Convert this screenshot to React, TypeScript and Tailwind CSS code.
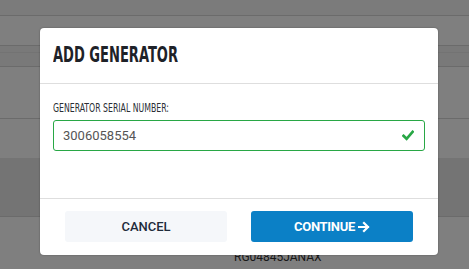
import React from "react";

export default function App() {
  return (
    <div className="relative w-[469px] h-[269px] overflow-hidden bg-white" style={{ fontFamily: "Roboto, 'Liberation Sans', sans-serif" }}>
      {/* background page (table) */}
      <div className="flex flex-col">
        <div className="h-[16px] bg-[#f6f6f6] border-b border-[#d6d6d6]" />
        <div className="h-[30px] border-b border-[#d6d6d6]" />
        <div className="h-[7px] bg-[#f2f2f2] border-b border-[#e6e6e6]" />
        <div className="h-[14px] bg-[#f2f2f2] border-b border-[#d6d6d6]" />
        <div className="h-[52px] border-b border-[#d6d6d6]" />
        <div className="h-[39px]" />
        <div className="h-[59px] bg-[#e8e8e8] border-b border-[#d6d6d6]" />
        <div className="h-[52px] pl-[234px] pt-[33px] text-[12px] leading-[14px] text-[#333]">RG04845JANAX</div>
      </div>

      {/* overlay */}
      <div className="absolute inset-0 bg-black/50" />

      {/* modal */}
      <div className="absolute left-[40px] top-[28px] w-[398px] h-[227px] bg-white rounded-[4px] shadow-[0_0_2px_rgba(0,0,0,0.35)] flex flex-col">
        <div className="h-[56px] px-[13px] flex items-center border-b border-[#dedede] pb-[2px]">
          <h2
            className="text-[22px] font-bold text-[#1e2228] whitespace-nowrap origin-left scale-x-[0.66]"
            style={{ fontFamily: "'DejaVu Sans Condensed', 'DejaVu Sans', sans-serif" }}
          >
            ADD GENERATOR
          </h2>
        </div>
        <div className="h-[115px] px-[13px] pt-[17px] border-b border-[#dedede]">
          <div
            className="text-[12px] leading-[14px] text-[#2a2e35] whitespace-nowrap origin-left scale-x-[0.72]"
            style={{ fontFamily: "'DejaVu Sans Condensed', 'DejaVu Sans', sans-serif" }}
          >
            GENERATOR SERIAL NUMBER:
          </div>
          <div className="mt-[5px] h-[31px] rounded-[3px] border border-[#28a745] flex items-center pl-[9px] pr-[10px]">
            <span className="flex-1 text-[13px] text-[#555]">3006058554</span>
            <svg width="12" height="11" viewBox="0 0 12 11" className="text-[#28a745]">
              <path d="M1.5 5.8 L4.6 8.8 L10.6 1.8" fill="none" stroke="currentColor" strokeWidth="2.6" strokeLinecap="square" />
            </svg>
          </div>
        </div>
        <div className="flex-1 px-[25px] pt-[12px] grid grid-cols-2 gap-[24px] items-start">
          <button className="h-[31px] rounded-[3px] bg-[#f5f7fa] text-[13px] font-medium text-[#1f2b3a]">CANCEL</button>
          <button className="h-[31px] rounded-[3px] bg-[#0b80c6] text-[13px] font-bold text-white tracking-[-0.3px] flex items-center justify-center gap-[3px]">
            CONTINUE
            <svg width="12" height="12" viewBox="0 0 12 12">
              <path d="M1 6 H10 M6 2 L10 6 L6 10" fill="none" stroke="white" strokeWidth="2.2" strokeLinecap="square" />
            </svg>
          </button>
        </div>
      </div>
    </div>
  );
}
